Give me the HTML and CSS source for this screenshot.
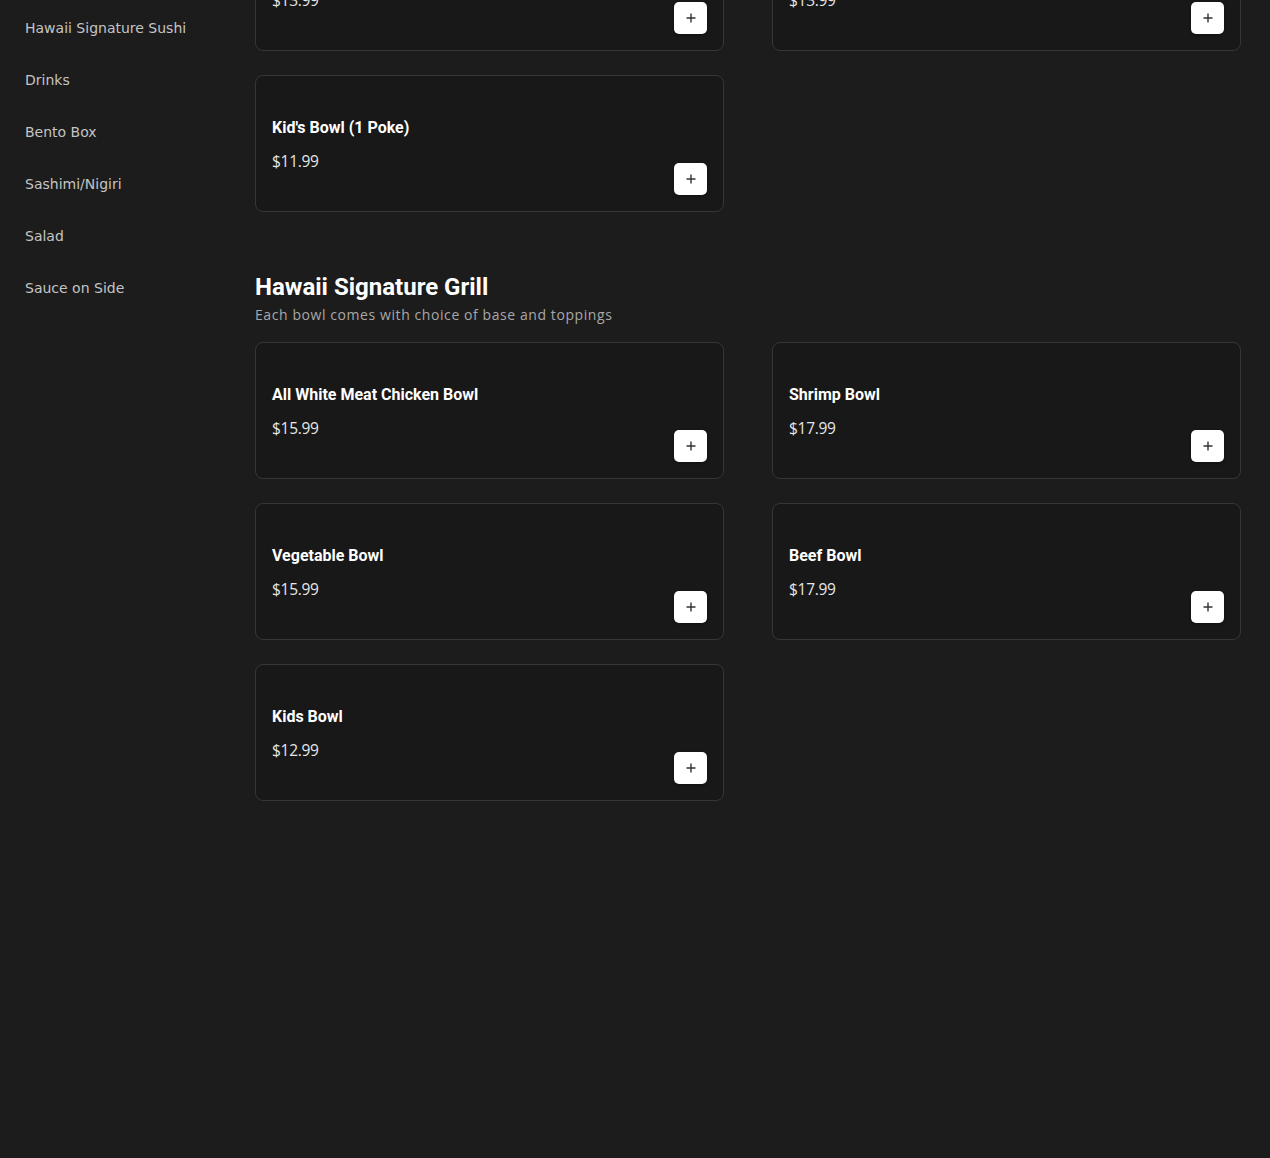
FILE: index.html
```html
<!DOCTYPE html>
<html lang="en">
<head>
<meta charset="utf-8">
<title>Menu</title>
<link rel="stylesheet" href="styles.css">
</head>
<body>
<div class="layout">
  <nav class="sidebar">
    <a class="nav-item">Hawaii Signature Sushi</a>
    <a class="nav-item">Drinks</a>
    <a class="nav-item">Bento Box</a>
    <a class="nav-item">Sashimi/Nigiri</a>
    <a class="nav-item">Salad</a>
    <a class="nav-item">Sauce on Side</a>
  </nav>
  <main class="main">
    <section class="section first">
      <div class="grid">
        <div class="card">
          <div class="info"><div class="name">Regular Bowl (2 Poke)</div><div class="price">$13.99</div></div>
          <button class="add"><svg viewBox="0 0 12 12" width="12" height="12"><path d="M6 1.5v9M1.5 6h9" stroke="#333" stroke-width="1.4" fill="none"/></svg></button>
        </div>
        <div class="card">
          <div class="info"><div class="name">Salmon Bowl</div><div class="price">$13.99</div></div>
          <button class="add"><svg viewBox="0 0 12 12" width="12" height="12"><path d="M6 1.5v9M1.5 6h9" stroke="#333" stroke-width="1.4" fill="none"/></svg></button>
        </div>
        <div class="card">
          <div class="info"><div class="name">Kid's Bowl (1 Poke)</div><div class="price">$11.99</div></div>
          <button class="add"><svg viewBox="0 0 12 12" width="12" height="12"><path d="M6 1.5v9M1.5 6h9" stroke="#333" stroke-width="1.4" fill="none"/></svg></button>
        </div>
      </div>
    </section>
    <section class="section">
      <h2 class="section-title">Hawaii Signature Grill</h2>
      <p class="section-sub">Each bowl comes with choice of base and toppings</p>
      <div class="grid">
        <div class="card">
          <div class="info"><div class="name">All White Meat Chicken Bowl</div><div class="price">$15.99</div></div>
          <button class="add"><svg viewBox="0 0 12 12" width="12" height="12"><path d="M6 1.5v9M1.5 6h9" stroke="#333" stroke-width="1.4" fill="none"/></svg></button>
        </div>
        <div class="card">
          <div class="info"><div class="name">Shrimp Bowl</div><div class="price">$17.99</div></div>
          <button class="add"><svg viewBox="0 0 12 12" width="12" height="12"><path d="M6 1.5v9M1.5 6h9" stroke="#333" stroke-width="1.4" fill="none"/></svg></button>
        </div>
        <div class="card">
          <div class="info"><div class="name">Vegetable Bowl</div><div class="price">$15.99</div></div>
          <button class="add"><svg viewBox="0 0 12 12" width="12" height="12"><path d="M6 1.5v9M1.5 6h9" stroke="#333" stroke-width="1.4" fill="none"/></svg></button>
        </div>
        <div class="card">
          <div class="info"><div class="name">Beef Bowl</div><div class="price">$17.99</div></div>
          <button class="add"><svg viewBox="0 0 12 12" width="12" height="12"><path d="M6 1.5v9M1.5 6h9" stroke="#333" stroke-width="1.4" fill="none"/></svg></button>
        </div>
        <div class="card">
          <div class="info"><div class="name">Kids Bowl</div><div class="price">$12.99</div></div>
          <button class="add"><svg viewBox="0 0 12 12" width="12" height="12"><path d="M6 1.5v9M1.5 6h9" stroke="#333" stroke-width="1.4" fill="none"/></svg></button>
        </div>
      </div>
    </section>
  </main>
</div>
</body>
</html>
```

FILE: styles.css
```css
* { box-sizing: border-box; }
html, body { margin: 0; padding: 0; background: #1c1c1c; height: 100%; }
body { font-family: "DejaVu Sans", sans-serif; color: #fff; overflow: hidden; }
.layout { display: flex; align-items: flex-start; }
.sidebar {
  width: 225px;
  flex-shrink: 0;
  display: flex;
  flex-direction: column;
  padding: 2px 0 0 25px;
}
.nav-item {
  display: block;
  font-size: 14px;
  line-height: 20px;
  padding: 16px 0;
  color: #c4c4c4;
  letter-spacing: 0;
}
.main { flex: 1; padding: 0 29px 0 30px; }
.section.first { margin-top: -86px; }
.section { margin-bottom: 59px; }
.grid {
  display: grid;
  grid-template-columns: 1fr 1fr;
  column-gap: 48px;
  row-gap: 24px;
}
.card {
  background: #181818;
  border: 1px solid #363636;
  border-radius: 8px;
  min-height: 137px;
  padding: 16px;
  display: flex;
  justify-content: space-between;
  align-items: flex-end;
}
.info { align-self: flex-start; padding-top: 24px; }
.name {
  font-family: Roboto, sans-serif;
  font-weight: 700;
  font-size: 16px;
  line-height: 24px;
  color: #fff;
}
.price {
  font-family: "Open Sans", sans-serif;
  font-size: 15.5px;
  line-height: 24px;
  margin-top: 9px;
  color: #e6e6e6;
  letter-spacing: -0.3px;
}
.add {
  width: 33px;
  height: 32px;
  border: none;
  background: #fff;
  border-radius: 5px;
  display: flex;
  align-items: center;
  justify-content: center;
  padding: 0;
  box-shadow: 0 1px 3px rgba(0,0,0,0.4);
}
.section-title {
  font-family: Roboto, sans-serif;
  font-weight: 700;
  font-size: 24px;
  line-height: 32px;
  margin: 0;
  color: #fff;
}
.section-sub {
  font-family: "Open Sans", sans-serif;
  font-size: 14px;
  line-height: 20px;
  color: #a8a8a8;
  letter-spacing: 0.58px;
  margin: 2px 0 17px;
}
```
